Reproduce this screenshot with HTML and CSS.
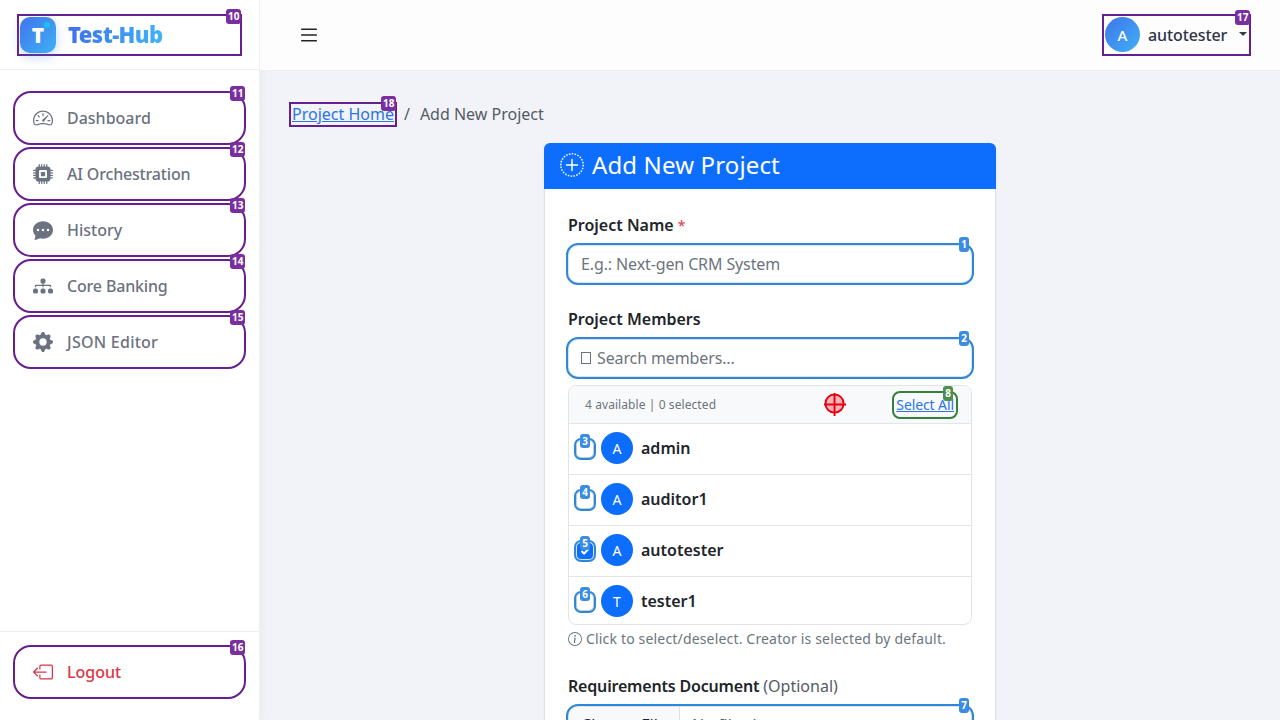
FILE: index.html
```html
<!DOCTYPE html>
<html lang="en">
<head>
<meta charset="utf-8">
<title>Add New Project</title>
<link rel="stylesheet" href="styles.css">
</head>
<body>
<div class="app">
  <aside class="sidebar">
    <div class="brand-wrap">
      <a class="brand tag-purple">
        <span class="logo">T<i class="logo-dot"></i></span>
        <span class="brand-name">Test-Hub</span>
        <b class="badge b-purple">10</b>
      </a>
    </div>
    <nav class="nav">
      <a class="nav-item"><svg class="ico" viewBox="0 0 16 16" fill="currentColor"><path d="M8 4a.5.5 0 0 1 .5.5V6a.5.5 0 0 1-1 0V4.500A.5.5 0 0 1 8 4M3.732 5.732a.5.5 0 0 1 .707 0l.915.914a.5.5 0 1 1-.708.708l-.914-.915a.5.5 0 0 1 0-.707M2 10a.5.5 0 0 1 .5-.5h1.586a.5.5 0 0 1 0 1H2.500A.5.5 0 0 1 2 10m9.500 0a.5.5 0 0 1 .5-.5h1.500a.5.5 0 0 1 0 1H12a.5.5 0 0 1-.5-.5m.754-4.246a.39.39 0 0 0-.527-.02L7.547 9.310a.91.91 0 1 0 1.302 1.258l3.434-4.297a.39.39 0 0 0-.029-.518z"/><path fill-rule="evenodd" d="M0 10a8 8 0 1 1 15.547 2.661c-.442 1.253-1.845 1.480-2.908 1.182C11.320 13.474 9.560 13 8 13s-3.320.474-4.640.843c-1.063.298-2.466.071-2.908-1.182A8 8 0 0 1 0 10m8-7a7 7 0 0 0-6.603 9.329c.203.575.923.876 1.680.630C4.397 12.590 6.331 12 8 12s3.603.590 4.923.959c.757.246 1.477-.055 1.680-.630A7 7 0 0 0 8 3"/></svg><span>Dashboard</span><b class="badge b-purple">11</b></a>
      <a class="nav-item"><svg class="ico" viewBox="0 0 16 16" fill="currentColor"><path d="M5 0a.5.5 0 0 1 .5.5V2h1V.5a.5.5 0 0 1 1 0V2h1V.5a.5.5 0 0 1 1 0V2h1V.5a.5.5 0 0 1 1 0V2A2.500 2.500 0 0 1 14 4.500h1.500a.5.5 0 0 1 0 1H14v1h1.500a.5.5 0 0 1 0 1H14v1h1.500a.5.5 0 0 1 0 1H14v1h1.500a.5.5 0 0 1 0 1H14a2.500 2.500 0 0 1-2.500 2.500v1.500a.5.5 0 0 1-1 0V14h-1v1.500a.5.5 0 0 1-1 0V14h-1v1.500a.5.5 0 0 1-1 0V14h-1v1.500a.5.5 0 0 1-1 0V14A2.500 2.500 0 0 1 2 11.500H.5a.5.5 0 0 1 0-1H2v-1H.5a.5.5 0 0 1 0-1H2v-1H.5a.5.5 0 0 1 0-1H2v-1H.5a.5.5 0 0 1 0-1H2A2.500 2.500 0 0 1 4.500 2V.5A.5.5 0 0 1 5 0"/><rect x="4.800" y="4.800" width="6.400" height="6.400" rx="1" fill="#fff"/><rect x="6.300" y="6.300" width="3.400" height="3.400" rx=".5"/></svg><span class="tight">AI Orchestration</span><b class="badge b-purple">12</b></a>
      <a class="nav-item"><svg class="ico" viewBox="0 0 16 16" fill="currentColor"><path d="M16 8c0 3.866-3.582 7-8 7a9 9 0 0 1-2.347-.306c-.584.296-1.925.864-4.181 1.234-.2.032-.352-.176-.273-.362.354-.836.674-1.950.770-2.966C.744 11.370 0 9.760 0 8c0-3.866 3.582-7 8-7s8 3.134 8 7M5 8a1 1 0 1 0-2 0 1 1 0 0 0 2 0m4 0a1 1 0 1 0-2 0 1 1 0 0 0 2 0m3 1a1 1 0 1 0 0-2 1 1 0 0 0 0 2"/></svg><span>History</span><b class="badge b-purple">13</b></a>
      <a class="nav-item"><svg class="ico" viewBox="0 0 16 16" fill="currentColor"><path fill-rule="evenodd" d="M6 3.500A1.500 1.500 0 0 1 7.500 2h1A1.500 1.500 0 0 1 10 3.500v1A1.500 1.500 0 0 1 8.500 6v1H14a.5.5 0 0 1 .5.5v1a.5.5 0 0 1-1 0V8h-5v.5a.5.5 0 0 1-1 0V8h-5v.5a.5.5 0 0 1-1 0v-1A.5.5 0 0 1 2 7h5.500V6A1.500 1.500 0 0 1 6 4.500zM0 11.500A1.500 1.500 0 0 1 1.500 10h1A1.500 1.500 0 0 1 4 11.500v1A1.500 1.500 0 0 1 2.500 14h-1A1.500 1.500 0 0 1 0 12.500zm6 0A1.500 1.500 0 0 1 7.500 10h1a1.500 1.500 0 0 1 1.500 1.500v1A1.500 1.500 0 0 1 8.500 14h-1A1.500 1.500 0 0 1 6 12.500zm6 0a1.500 1.500 0 0 1 1.500-1.500h1a1.500 1.500 0 0 1 1.500 1.500v1a1.500 1.500 0 0 1-1.500 1.500h-1a1.500 1.500 0 0 1-1.500-1.500z"/></svg><span class="tight">Core Banking</span><b class="badge b-purple">14</b></a>
      <a class="nav-item"><svg class="ico" viewBox="0 0 16 16" fill="currentColor"><path d="M9.405 1.050c-.413-1.400-2.397-1.400-2.810 0l-.1.340a1.464 1.464 0 0 1-2.105.872l-.31-.17c-1.283-.698-2.686.705-1.987 1.987l.169.311c.446.820.023 1.841-.872 2.105l-.34.100c-1.400.413-1.400 2.397 0 2.810l.34.100a1.464 1.464 0 0 1 .872 2.105l-.17.310c-.698 1.283.705 2.686 1.987 1.987l.311-.169a1.464 1.464 0 0 1 2.105.872l.1.340c.413 1.400 2.397 1.400 2.810 0l.1-.34a1.464 1.464 0 0 1 2.105-.872l.31.170c1.283.698 2.686-.705 1.987-1.987l-.169-.311a1.464 1.464 0 0 1 .872-2.105l.34-.100c1.400-.413 1.400-2.397 0-2.810l-.34-.100a1.464 1.464 0 0 1-.872-2.105l.17-.31c.698-1.283-.705-2.686-1.987-1.987l-.311.169a1.464 1.464 0 0 1-2.105-.872zM8 10.930a2.929 2.929 0 1 1 0-5.860 2.929 2.929 0 0 1 0 5.858z"/></svg><span class="wide">JSON Editor</span><b class="badge b-purple">15</b></a>
    </nav>
    <div class="side-foot">
      <a class="nav-item logout"><svg class="ico" viewBox="0 0 16 16" fill="currentColor"><path fill-rule="evenodd" d="M6 12.500a.5.5 0 0 0 .5.5h8a.5.5 0 0 0 .5-.5v-9a.5.5 0 0 0-.5-.5h-8a.5.5 0 0 0-.5.5v2a.5.5 0 0 1-1 0v-2A1.500 1.500 0 0 1 6.500 2h8A1.500 1.500 0 0 1 16 3.500v9a1.500 1.500 0 0 1-1.500 1.500h-8A1.500 1.500 0 0 1 5 12.500v-2a.5.5 0 0 1 1 0z"/><path fill-rule="evenodd" d="M.146 8.354a.5.5 0 0 1 0-.708l3-3a.5.5 0 1 1 .708.708L1.707 7.500H10.500a.5.5 0 0 1 0 1H1.707l2.147 2.146a.5.5 0 0 1-.708.708z"/></svg><span>Logout</span><b class="badge b-purple">16</b></a>
    </div>
  </aside>

  <div class="main">
    <header class="topbar">
      <svg class="burger" viewBox="0 0 16 16" fill="currentColor"><path fill-rule="evenodd" d="M2.500 12a.5.5 0 0 1 .5-.5h10a.5.5 0 0 1 0 1H3a.5.5 0 0 1-.5-.5m0-4a.5.5 0 0 1 .5-.5h10a.5.5 0 0 1 0 1H3a.5.5 0 0 1-.5-.5m0-4a.5.5 0 0 1 .5-.5h10a.5.5 0 0 1 0 1H3a.5.5 0 0 1-.5-.5"/></svg>
      <a class="user tag-purple">
        <span class="user-av">A</span>
        <span class="user-name">autotester</span>
        <i class="caret"></i>
        <b class="badge b-purple">17</b>
      </a>
    </header>

    <main class="content">
      <div class="crumbs">
        <a class="crumb-link tag-purple">Project Home<b class="badge b-purple">18</b></a>
        <span class="crumb-sep">/</span>
        <span class="crumb-cur">Add New Project</span>
      </div>

      <section class="card">
        <h2 class="card-head">
          <svg class="head-ico" viewBox="0 0 24 24" fill="none" stroke="#fff"><circle cx="12" cy="12" r="11.200" stroke-width="1.500" stroke-dasharray="1.500 1.400"/><path d="M12 6.500v11M6.500 12h11" stroke-width="1.500" stroke-linecap="round"/></svg>
          Add New Project
        </h2>
        <div class="card-body">
          <div class="group">
            <label class="label">Project Name <span class="req">*</span></label>
            <div class="field"><div class="input ph">E.g.: Next-gen CRM System</div><b class="badge b-blue">1</b></div>
          </div>
          <div class="group g-members">
            <label class="label">Project Members</label>
            <div class="field"><div class="input ph"><span class="tofu"></span>Search members...</div><b class="badge b-blue">2</b></div>
          </div>
          <div class="members">
            <div class="m-head">
              <span class="m-count">4 available | 0 selected</span>
              <svg class="target" viewBox="0 0 24 24"><circle cx="11" cy="11" r="9.500" fill="#f9b5b5" stroke="#e60012" stroke-width="2"/><path d="M11 0v24M0 12h23" stroke="#e60012" stroke-width="2"/></svg>
              <a class="sel-all">Select All<b class="badge b-green">8</b></a>
            </div>
            <div class="m-row"><span class="check"><b class="badge b-blue">3</b></span><span class="av">A</span><span class="m-name">admin</span></div>
            <div class="m-row"><span class="check"><b class="badge b-blue">4</b></span><span class="av">A</span><span class="m-name">auditor1</span></div>
            <div class="m-row"><span class="check on"><svg class="tick" viewBox="0 0 12 12"><path d="M2.500 6l2.500 2.500 4.500-4.500" fill="none" stroke="currentColor" stroke-width="2"/></svg><b class="badge b-blue">5</b></span><span class="av">A</span><span class="m-name">autotester</span></div>
            <div class="m-row"><span class="check"><b class="badge b-blue">6</b></span><span class="av">T</span><span class="m-name">tester1</span></div>
          </div>
          <p class="hint"><svg class="hint-ico" viewBox="0 0 16 16" fill="currentColor"><path d="M8 15A7 7 0 1 1 8 1a7 7 0 0 1 0 14m0 1A8 8 0 1 0 8 0a8 8 0 0 0 0 16"/><path d="m8.930 6.588-2.290.287-.082.380.450.083c.294.070.352.176.288.469l-.738 3.468c-.194.897.105 1.319.808 1.319.545 0 1.178-.252 1.465-.598l.088-.416c-.200.176-.492.246-.686.246-.275 0-.375-.193-.304-.533zM9 4.500a1 1 0 1 1-2 0 1 1 0 0 1 2 0"/></svg>Click to select/deselect. Creator is selected by default.</p>
          <div class="group g-req">
            <label class="label">Requirements Document <span class="opt">(Optional)</span></label>
            <div class="field"><div class="file"><span class="file-btn">Choose File</span><span class="file-txt">No file chosen</span></div><b class="badge b-blue">7</b></div>
          </div>
        </div>
      </section>
    </main>
  </div>
</div>
</body>
</html>
```
FILE: styles.css
```css
* { box-sizing: border-box; }
html, body { margin: 0; height: 100%; overflow: hidden; }
body { font-family: "Noto Sans", "Open Sans", sans-serif; font-size: 16px; color: #212529; background: #f1f3f8; }
a { text-decoration: none; color: inherit; }

.app { display: flex; height: 720px; }
.sidebar { width: 260px; flex: none; background: #fff; border-right: 1px solid #eef0f4; box-shadow: 2px 0 8px rgba(0,0,0,.04); display: flex; flex-direction: column; }
.brand-wrap { height: 70px; border-bottom: 1px solid #eceef1; padding: 16px 19px 0; flex: none; }
.tag-purple { outline: 2px solid #661f8e; position: relative; }
.brand { display: flex; align-items: center; height: 38px; width: 221px; }
.logo { width: 36px; height: 36px; margin-left: 1px; border-radius: 10px; background: linear-gradient(135deg, #3f75ec, #40b0f5); box-shadow: 0 4px 12px rgba(64,130,240,.3); color: #fff; font-weight: 900; font-size: 21px; display: flex; align-items: center; justify-content: center; position: relative; }
.logo-dot { position: absolute; top: 5px; right: 6px; width: 6px; height: 6px; border-radius: 50%; background: #17c3f5; }
.brand-name { margin: -2px 0 0 12px; font-size: 22px; font-weight: 900; letter-spacing: -.6px; background: linear-gradient(90deg, #3f70ec, #40b4f5); -webkit-background-clip: text; background-clip: text; color: transparent; }

.badge { position: absolute; top: -7px; right: -1px; min-width: 10px; height: 15px; padding: 0 2px; border-radius: 3px; color: #fff; font: 700 10px/15px "Noto Sans", sans-serif; text-align: center; }
.b-purple { background: #7a2f9f; padding: 0 2px; width: 15px; }
.b-blue { background: #3a8de0; }
.b-green { background: #4d8f4f; }

.nav { display: flex; flex-direction: column; gap: 6px; padding: 23px 15px 0; }
.nav-item { position: relative; display: flex; align-items: center; gap: 14px; height: 50px; padding: 0 18px; border-radius: 16px; outline: 2px solid #661f8e; color: #6b7280; font-size: 16px; font-weight: 500; }
.tight { letter-spacing: -.17px; }
.wide { letter-spacing: .25px; }
.ico { width: 20px; height: 20px; flex: none; }
.side-foot { margin-top: auto; border-top: 1px solid #eceef1; padding: 15px 15px 23px; }
.logout { color: #dc3545; }

.main { flex: 1; display: flex; flex-direction: column; min-width: 0; }
.topbar { height: 71px; flex: none; display: flex; align-items: center; justify-content: space-between; padding: 0 31px 1px 40px; background: #fdfdfe; border-bottom: 1px solid #eceef1; }
.burger { width: 18px; height: 18px; color: #212529; transform: scale(1.3); }
.user { display: flex; align-items: center; height: 38px; width: 145px; }
.user-av { width: 35px; height: 35px; margin-left: 1px; border-radius: 50%; background: linear-gradient(135deg, #3f75ec, #40b0f5); color: #fff; display: flex; align-items: center; justify-content: center; font-size: 15px; font-weight: 500; }
.user-name { margin-left: 8px; font-size: 16px; font-weight: 500; letter-spacing: -.1px; color: #2f3547; }
.caret { position: absolute; right: 2px; top: 16px; width: 0; height: 0; border: 4.500px solid transparent; border-top-color: #343a46; border-bottom: 0; }
.user .badge { right: -1px; top: -6px; }

.content { flex: 1; padding: 33px 30px 0; }
.crumbs { display: flex; align-items: center; height: 21px; color: #555b66; font-size: 16px; padding-left: 1px; }
.crumb-link { color: #2b74e8; text-decoration: underline; line-height: 21px; padding: 0 1px; }
.crumb-link .badge { top: -8px; right: -1px; }
.crumb-sep { margin: 0 10px 0 9px; padding-bottom: 2px; }
.crumb-cur { padding-bottom: 2px; }
.card { width: 452px; margin: 18px auto 0; background: #fff; border: 1px solid #dfe2e8; border-radius: 6px; box-shadow: 0 1px 3px rgba(0,0,0,.05); }
.card-head { display: flex; align-items: center; gap: 8px; margin: -1px -1px 0; height: 46px; padding: 0 16px 3px; background: #0d6efd; color: #fff; font-size: 24px; font-weight: 400; letter-spacing: .13px; border-radius: 6px 6px 0 0; }
.head-ico { width: 24px; height: 24px; flex: none; }
.card-body { padding: 26px 23px 0; }
.label { display: block; font-weight: 600; font-size: 16px; line-height: 20px; margin-bottom: 10px; color: #212529; }
.req { color: #dc3545; font-weight: 400; font-size: 14px; line-height: 1; }
.opt { font-weight: 400; color: #555b66; letter-spacing: 0; }
.field { position: relative; }
.input { height: 38px; border: 1px solid #dee2e6; border-radius: 10px; outline: 2px solid #2d88d8; padding: 0 12px; display: flex; align-items: center; background: #fff; font-size: 16px; letter-spacing: -.12px; }
.ph { color: #6c757d; }
.tofu { width: 10px; height: 12px; border: 1px solid #6c757d; margin-right: 6px; flex: none; }
.field > .badge { right: 3px; top: -8px; }
.g-members { margin-top: 26px; }
.members { margin-top: 8px; border: 1px solid #e2e4e8; border-radius: 8px; }
.m-head { height: 38px; display: flex; align-items: center; padding: 0 16px; background: #f8f9fa; border-bottom: 1px solid #e2e4e8; border-radius: 8px 8px 0 0; position: relative; }
.m-count { font-size: 12px; color: #6c757d; letter-spacing: .08px; }
.target { position: absolute; left: 255px; top: 7px; width: 23px; height: 23px; }
.sel-all { margin-left: auto; position: relative; color: #2b74e8; text-decoration: underline; font-size: 14px; letter-spacing: -.1px; line-height: 24px; padding: 0 2px; outline: 2px solid #35803a; border-radius: 6px; margin-right: -1px; }
.sel-all .badge { top: -7px; right: 3px; }
.m-row { height: 51px; display: flex; align-items: center; padding: 0 7px 2px; border-bottom: 1px solid #e2e4e8; }
.m-row:last-child { border-bottom: 0; height: 47px; padding: 1px 7px 0; }
.check { position: relative; width: 18px; height: 18px; margin: 2px 7px 0 0; border: 1px solid #c5cad2; border-radius: 5px; outline: 2px solid #2d88d8; background: #fff; flex: none; }
.check.on { background: #0d6efd; border-color: #cfe2ff; color: #fff; display: flex; align-items: center; justify-content: center; }
.tick { width: 12px; height: 12px; }
.check .badge { top: -7px; right: 3px; width: 10px; height: 14px; line-height: 14px; padding: 0; }
.av { width: 32px; height: 32px; border-radius: 50%; background: #0d6efd; color: #fff; display: flex; align-items: center; justify-content: center; font-size: 14px; flex: none; }
.m-name { margin-left: 8px; font-weight: 600; font-size: 16px; color: #212529; }
.hint { margin: 5px 0 0; font-size: 14px; line-height: 18px; letter-spacing: .17px; color: #6c757d; display: flex; align-items: center; gap: 4px; }
.hint-ico { width: 14px; height: 14px; flex: none; }
.g-req { margin-top: 28px; }
.g-req .label { letter-spacing: -.18px; }
.file { display: flex; height: 38px; border: 1px solid #dee2e6; border-radius: 10px; outline: 2px solid #2d88d8; overflow: hidden; font-size: 16px; }
.file-btn { width: 111px; background: #f8f9fa; border-right: 1px solid #dee2e6; display: flex; align-items: center; justify-content: center; }
.file-txt { padding: 0 12px; display: flex; align-items: center; color: #555b66; }
```
